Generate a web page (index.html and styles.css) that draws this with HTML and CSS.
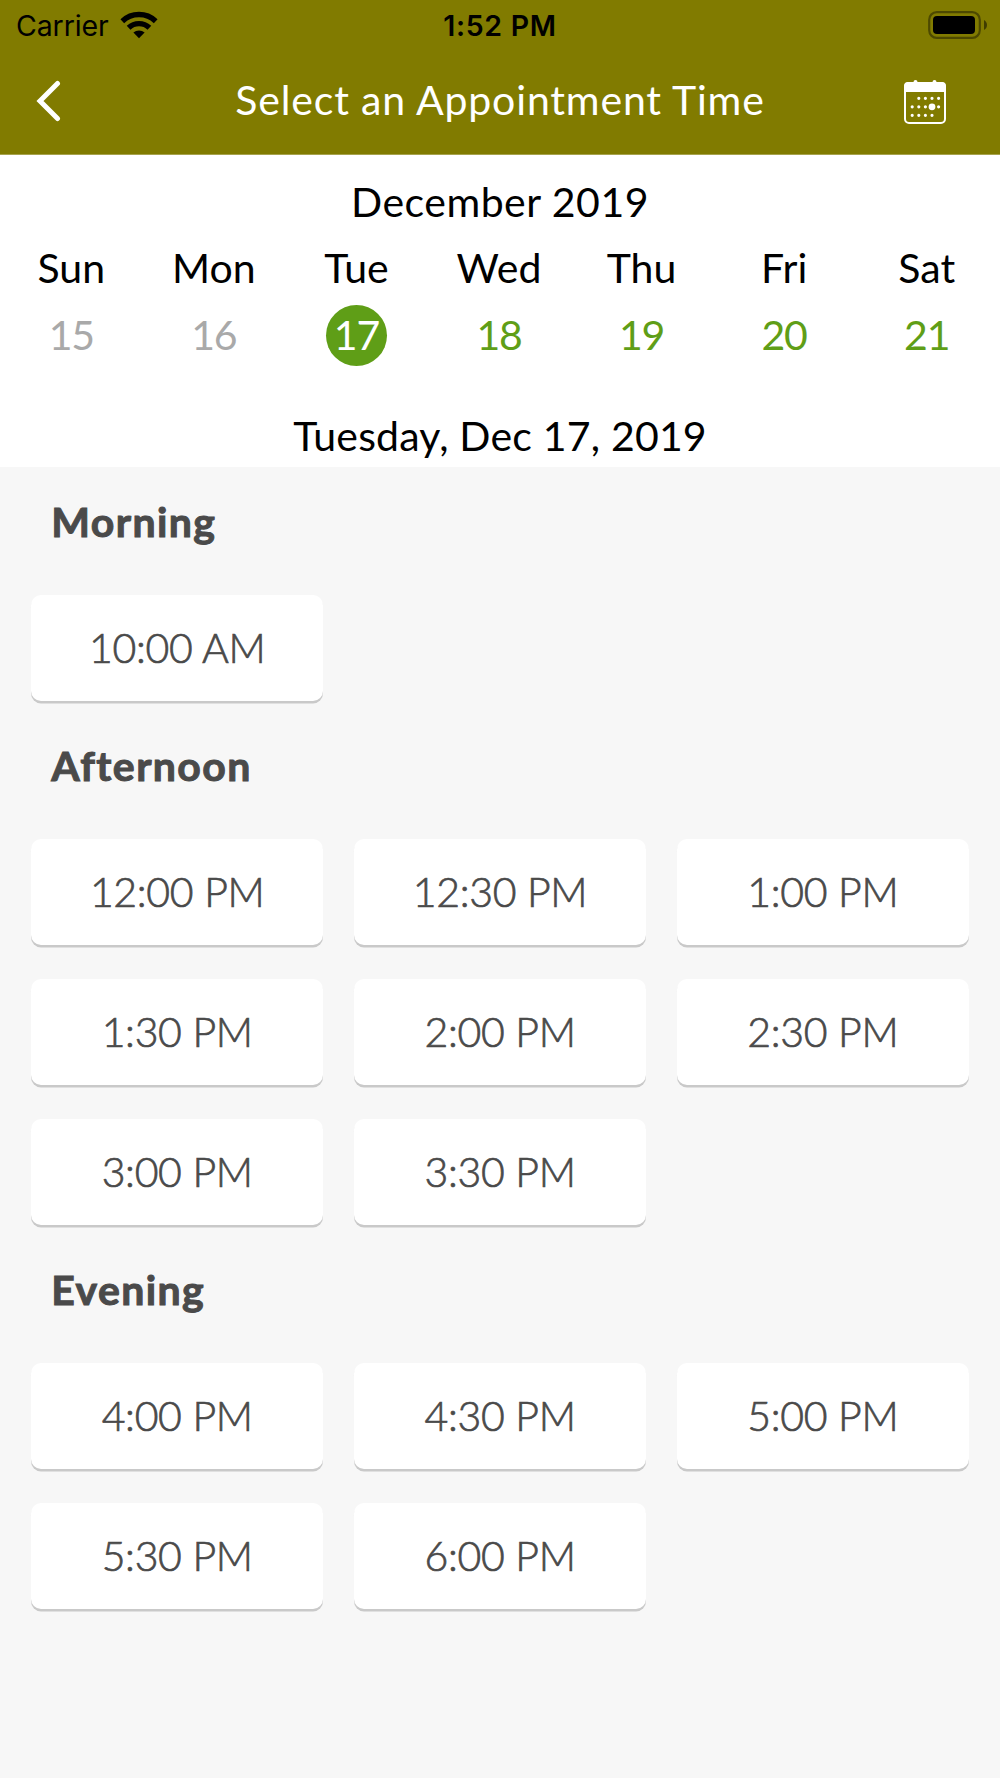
FILE: index.html
```html
<!DOCTYPE html>
<html lang="en">
<head>
<meta charset="utf-8">
<title>Select an Appointment Time</title>
<meta name="viewport" content="width=device-width,initial-scale=1">
<link rel="stylesheet" href="styles.css">
</head>
<body>

<header>
  <div class="status-bar">
    <div class="carrier">
      <span>Carrier</span>
      <svg width="38" height="28" viewBox="0 0 38 28">
        <path d="M19 27.2 13.4 21.6a8.2 8.2 0 0 1 11.2 0Z"/>
        <g fill="none" stroke="#000" stroke-width="5.4">
          <path d="M8.6 16.7a15.2 15.2 0 0 1 20.8 0"/>
          <path d="M2.3 10.2a24.2 24.2 0 0 1 33.4 0"/>
        </g>
      </svg>
    </div>
    <span class="clock">1:52 PM</span>
    <svg class="battery" width="60" height="28" viewBox="0 0 60 28">
      <rect x="1.2" y="1.2" width="50.6" height="25.6" rx="7.5" fill="none" stroke="#000" stroke-opacity=".4" stroke-width="2.2"/>
      <rect x="5" y="5" width="42" height="18" rx="4"/>
      <path d="M56 9c4 2 4 8 0 10Z" fill-opacity=".5"/>
    </svg>
  </div>
  <nav>
    <svg class="back" width="26" height="42" viewBox="0 0 26 42">
      <path d="M21.5 3.5 4 21l17.5 17.5" fill="none" stroke="#fff" stroke-width="5" stroke-linecap="round"/>
    </svg>
    <h1>Select an Appointment Time</h1>
    <svg class="calendar" width="42" height="44" viewBox="0 0 42 44">
      <rect x="1" y="3" width="40" height="40" rx="4" fill="none" stroke="#fff" stroke-width="2"/>
      <path d="M0 12V6a4 4 0 0 1 4-4h5.5a2 2 0 0 1 4 0h15a2 2 0 0 1 4 0H38a4 4 0 0 1 4 4v6Z" fill="#fff"/>
      <g fill="none" stroke="#fff" stroke-width="3.2" stroke-linecap="round">
        <path d="M14.8 18.3h20" stroke-dasharray="0 6.6"/>
        <path d="M8.2 26.8h27" stroke-dasharray="0 6.6"/>
        <path d="M8.2 35.3h20" stroke-dasharray="0 6.6"/>
      </g>
      <circle cx="28" cy="26.8" r="3.4" fill="#fff"/>
    </svg>
  </nav>
</header>

<section class="week">
  <h2 class="month">December 2019</h2>
  <div class="days">
    <span>Sun</span><span>Mon</span><span>Tue</span><span>Wed</span><span>Thu</span><span>Fri</span><span>Sat</span>
  </div>
  <div class="dates">
    <span class="past">15</span>
    <span class="past">16</span>
    <span class="selected">17</span>
    <span>18</span>
    <span>19</span>
    <span>20</span>
    <span>21</span>
  </div>
  <p class="current">Tuesday, Dec 17, 2019</p>
</section>

<main>
  <h3>Morning</h3>
  <div class="slots">
    <div class="slot">10:00 AM</div>
  </div>

  <h3>Afternoon</h3>
  <div class="slots">
    <div class="slot">12:00 PM</div>
    <div class="slot">12:30 PM</div>
    <div class="slot">1:00 PM</div>
    <div class="slot">1:30 PM</div>
    <div class="slot">2:00 PM</div>
    <div class="slot">2:30 PM</div>
    <div class="slot">3:00 PM</div>
    <div class="slot">3:30 PM</div>
  </div>

  <h3>Evening</h3>
  <div class="slots">
    <div class="slot">4:00 PM</div>
    <div class="slot">4:30 PM</div>
    <div class="slot">5:00 PM</div>
    <div class="slot">5:30 PM</div>
    <div class="slot">6:00 PM</div>
  </div>
</main>

</body>
</html>
```
FILE: styles.css
```css
/* Reset & Base */
*,*::before,*::after{box-sizing:border-box;margin:0;padding:0}
body{
  font-family:Lato,"Liberation Sans",sans-serif;
  font-size:41px;
  background:#f7f7f7;
  color:#000;
  min-height:100vh;
}
h1,h2{font-size:inherit;font-weight:400}
svg{display:block}
/* Header */
header{background:#817b00;border-bottom:1px solid #a7a34d}
.status-bar{
  display:grid;grid-template-columns:1fr auto 1fr;align-items:center;
  height:43px;padding:8px 12px 0 16px;
  font:28.5px/36px Inter,"Liberation Sans",sans-serif;
}
.carrier{display:flex;align-items:center;gap:11px;letter-spacing:-.1px}
.carrier svg{margin-top:-3px}
.clock{font-weight:600;letter-spacing:.7px;margin-right:4px}
.battery{justify-self:end;margin-top:-3px}
nav{
  display:flex;align-items:center;justify-content:space-between;
  height:111px;padding:0 54px 0 36px;color:#fff;
}
nav h1{letter-spacing:.84px;margin:2px 0 0 34px}
.back{margin-top:5px}
.calendar{margin-top:7px}
/* Week */
.week{background:#fff;height:312px;padding-top:17px;text-align:center}
.month{line-height:60px;letter-spacing:.5px}
.days,.dates{display:grid;grid-template-columns:repeat(7,1fr);justify-items:center;margin-right:2px}
.days{margin-top:6px;line-height:60px}
.dates{margin-top:7px;color:#5f9e17}
.dates span{width:61px;height:61px;line-height:59px;letter-spacing:-1.2px}
.dates .past{color:#a9a9a9}
.dates .selected{background:#5f9e17;color:#fff;border-radius:50%}
.current{margin-top:39px;line-height:62px;letter-spacing:.2px}
/* Time slots */
main{padding:8px 31.3px 0;color:#4a4a4a}
h3{
  height:104px;padding-left:20px;
  font-size:41px;font-weight:700;line-height:94px;letter-spacing:1.4px;
  -webkit-text-stroke:1px #4a4a4a;
}
.slots{display:grid;grid-template-columns:repeat(3,1fr);gap:34px 31px;padding:16px 0 18px}
.slot{
  height:106px;
  background:#fff;border-radius:10px;
  box-shadow:0 2.5px 0 #c9c9c9;
  font-weight:300;line-height:106px;text-align:center;letter-spacing:-.3px;
  -webkit-text-stroke:.7px #4a4a4a;
}
```
